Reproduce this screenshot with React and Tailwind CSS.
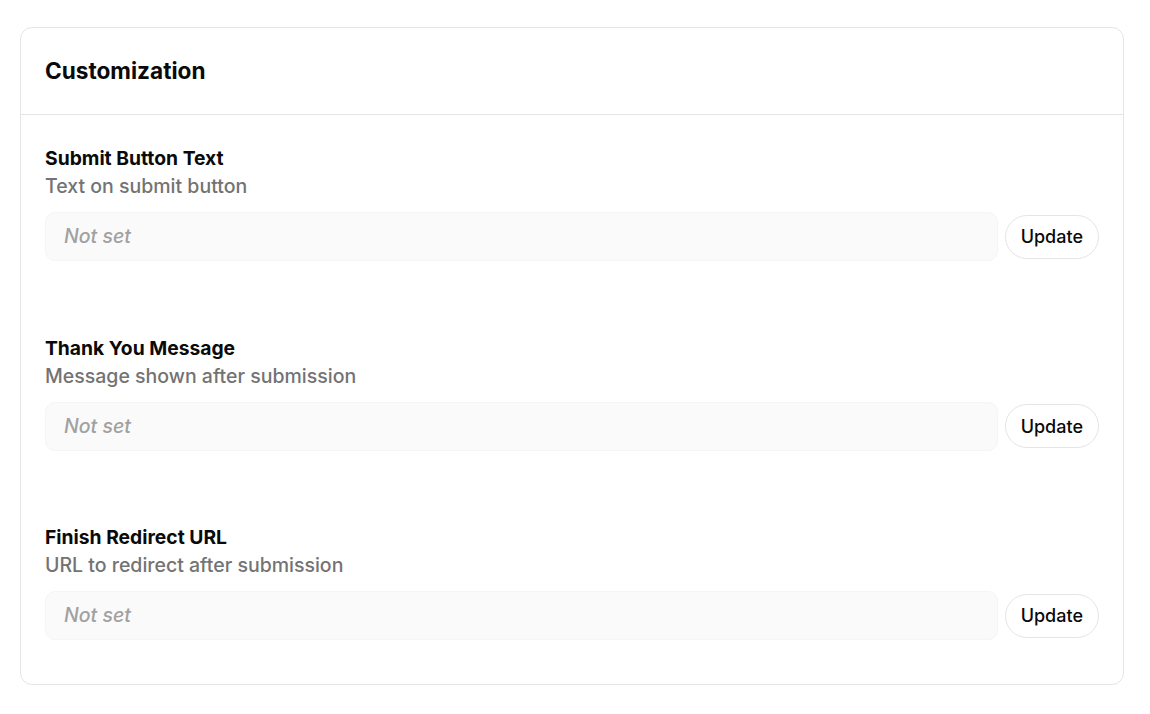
import React from 'react';

const fields = [
    { label: 'Submit Button Text', hint: 'Text on submit button' },
    { label: 'Thank You Message', hint: 'Message shown after submission' },
    { label: 'Finish Redirect URL', hint: 'URL to redirect after submission' },
];

const FieldRow = ({ label, hint }) => (
    <div className="flex flex-col">
        <span className="text-[19.3px] leading-7 font-bold text-neutral-950">{label}</span>
        <span className="text-[19.5px] leading-7 font-medium text-neutral-500">{hint}</span>
        <div className="flex items-center gap-[7px] mt-3">
            <div className="flex-1 h-[49px] flex items-center px-[18px] pt-px rounded-[10px] border border-neutral-100 bg-[#fafafa]">
                <span className="text-[19.5px] italic font-medium text-neutral-400">Not set</span>
            </div>
            <button className="h-[44px] px-[15px] rounded-full border border-neutral-200 bg-white text-[18px] font-medium text-neutral-950">
                Update
            </button>
        </div>
    </div>
);

export default function App() {
    return (
        <div className="min-h-screen bg-white pt-[27px] pl-5" style={{ fontFamily: 'Inter, "Noto Sans", sans-serif' }}>
            <div className="w-[1104px] rounded-xl border border-neutral-200 bg-white">
                <div className="h-[87px] flex items-center px-6 pb-px border-b border-neutral-200">
                    <h2 className="text-[22.6px] font-bold text-neutral-950">Customization</h2>
                </div>
                <div className="flex flex-col gap-[72.5px] px-6 pt-[29px] pb-[44px]">
                    {fields.map((f) => (
                        <FieldRow key={f.label} {...f} />
                    ))}
                </div>
            </div>
        </div>
    );
}
